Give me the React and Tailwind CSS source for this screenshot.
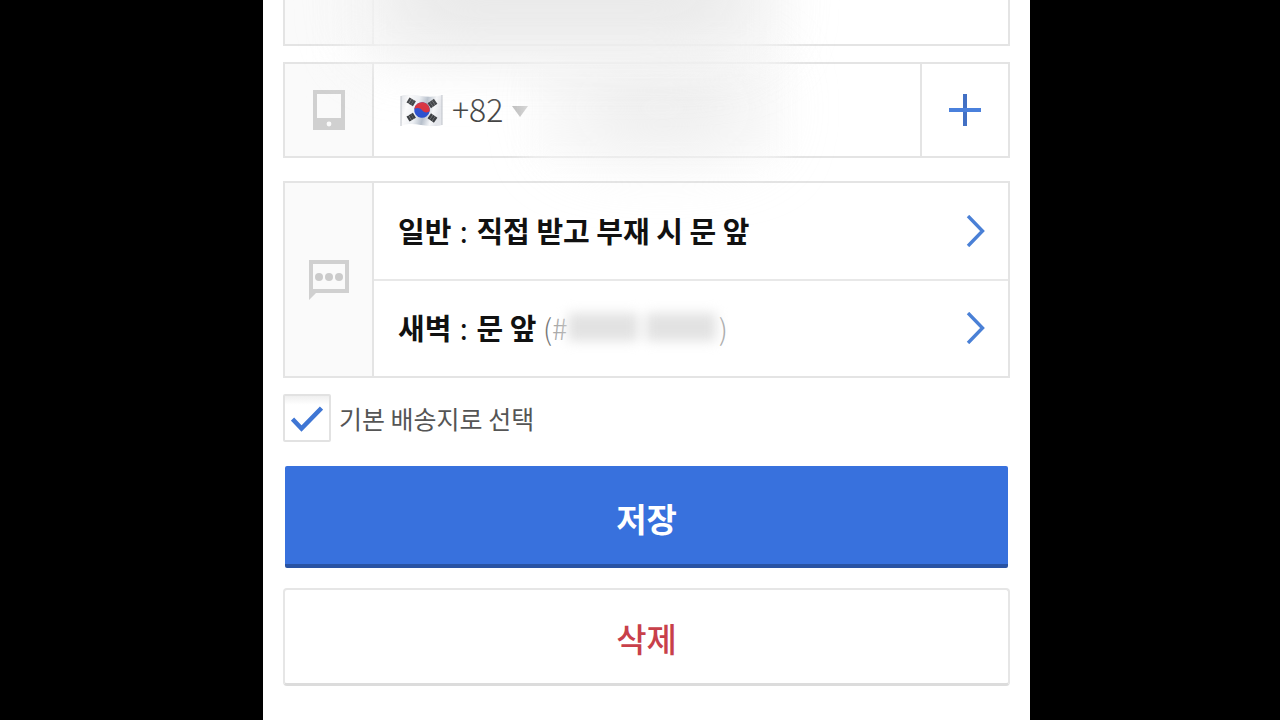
import { useState } from 'react'

function TabletIcon() {
  return (
    <svg className="w-8 h-10" viewBox="0 0 32 40" aria-hidden="true">
      <path fill="#d0d0d0" fillRule="evenodd" d="M0 0h32v40H0zM4 4v24h24V4z" />
      <circle cx="16" cy="34" r="2.4" fill="#fafafa" />
    </svg>
  )
}

function ChatIcon() {
  return (
    <svg className="w-10 h-10" viewBox="0 0 40 40" aria-hidden="true">
      <path fill="#d0d0d0" fillRule="evenodd" d="M0 0h40v33H7L0 40zM4 4v25h32V4z" />
      <circle cx="10" cy="17" r="4" fill="#cbcbcb" />
      <circle cx="20" cy="17" r="4" fill="#cbcbcb" />
      <circle cx="30" cy="17" r="4" fill="#cbcbcb" />
    </svg>
  )
}

function Chevron() {
  return (
    <svg className="w-5 h-8 shrink-0" viewBox="0 0 20 32" fill="none" stroke="#4a80d6" strokeWidth="3.4" aria-hidden="true">
      <path d="M2 1l14.5 15L2 31" />
    </svg>
  )
}

function Flag() {
  return (
    <svg className="w-11 h-8 shrink-0" viewBox="0 0 44 32" aria-hidden="true">
      <defs>
        <linearGradient id="cloth" x1="0" x2="1" y1="0" y2="0.2">
          <stop offset="0" stopColor="#e0e3e8" />
          <stop offset="0.2" stopColor="#fbfbfc" />
          <stop offset="0.45" stopColor="#eceff3" />
          <stop offset="0.65" stopColor="#b6bfcb" />
          <stop offset="0.85" stopColor="#f6f7f9" />
          <stop offset="1" stopColor="#e3e5ea" />
        </linearGradient>
      </defs>
      <path d="M1 2C8 0 14 1 21 2s15 1 21-1v30c-7 2-14 1-21 0S8 29 1 32z" fill="url(#cloth)" />
      <path d="M1 2v30M42 1v30" stroke="#bfc3ca" />
      <g transform="rotate(8 22 16)">
        <circle cx="22" cy="16" r="7.8" fill="#2b50cf" />
        <path d="M14.200 16a7.800 7.800 0 0 1 15.600 0c-2.600 3-5.800 2-7.800 0s-5.200-2-7.800 0z" fill="#d92f3c" />
      </g>
      <g stroke="#3b3e42" strokeWidth="2.4">
        <path d="M7.500 9l3-5M9.700 10.400l3-5M11.900 11.700l3-5" />
        <path d="M7.500 22l3 5M9.700 20.700l3 5M11.900 19.300l3 5" />
        <path d="M28.500 8.500l3.500 5M30.700 7l3.500 5M32.900 5.500l3.500 5" />
        <path d="M28.500 25l3.500-5M30.700 26.500l3.500-5M32.900 28l3.500-5" />
      </g>
    </svg>
  )
}

function IconCell({ children }) {
  return (
    <div className="w-[89px] shrink-0 flex items-center justify-center bg-[#fafafa] border-r-2 border-[#e4e4e4]">
      {children}
    </div>
  )
}

function RequestRow({ children }) {
  return (
    <button type="button" className="flex-1 w-full flex items-center justify-between pl-6 pr-[22px] text-left text-[29px] leading-10 text-[#111]">
      <span className="flex items-center pb-0.5">{children}</span>
      <Chevron />
    </button>
  )
}

export default function App() {
  const [isDefault, setIsDefault] = useState(true)

  return (
    <div className="min-h-screen grid grid-cols-[263fr_767fr_250fr] bg-black overflow-hidden font-['Noto_Sans_CJK_KR',sans-serif]">
      <form className="col-start-2 bg-white px-5 overflow-hidden" onSubmit={(e) => e.preventDefault()}>
        {/* address, masked */}
        <div className="relative h-[46px] flex border-2 border-t-0 border-[#e4e4e4]">
          <IconCell />
          <div className="absolute z-10 left-16 right-56 -top-16 h-32 bg-[#f8f8f8]/90 blur-xl pointer-events-none" />
          <div className="absolute z-10 left-24 right-64 -top-10 h-18 rounded-full bg-[#e2e2e2] blur-2xl pointer-events-none" />
        </div>

        {/* phone */}
        <div className="relative mt-4 h-24 flex border-2 border-[#e4e4e4]">
          <IconCell><TabletIcon /></IconCell>
          <div className="flex-1 min-w-0 flex items-center pl-[26px]">
            <Flag />
            <div className="relative ml-2">
              <select aria-label="국가 번호" defaultValue="82" className="block appearance-none w-20 h-12 pb-1 bg-transparent text-[32px] leading-10 font-light text-[#444] outline-none">
                <option value="82">+82</option>
              </select>
              <svg className="absolute right-1 top-5 w-4 h-3 pointer-events-none" viewBox="0 0 16 12" aria-hidden="true">
                <path d="M0 0h16L8 11z" fill="#b8b8b8" />
              </svg>
            </div>
            <input type="tel" aria-label="휴대폰 번호" className="flex-1 min-w-0 h-12 bg-transparent outline-none" />
          </div>
          <button type="button" aria-label="번호 추가" className="w-[88px] shrink-0 flex items-center justify-center border-l-2 border-[#e4e4e4]">
            <svg className="w-8 h-8" viewBox="0 0 32 32" fill="none" strokeWidth="4" aria-hidden="true">
              <path d="M16 0v32" stroke="#4270c4" />
              <path d="M0 16h32" stroke="#4a80dc" />
            </svg>
          </button>
          <div className="absolute left-60 right-56 -top-1 -bottom-1 bg-[#fbfbfb]/80 blur-md pointer-events-none" />
          <div className="absolute left-72 right-64 top-4 bottom-5 rounded-full bg-[#e6e6e6] blur-2xl pointer-events-none" />
        </div>

        {/* delivery requests */}
        <div className="mt-[23px] h-[197px] flex border-2 border-[#e4e4e4]">
          <IconCell><ChatIcon /></IconCell>
          <div className="flex-1 flex flex-col divide-y-2 divide-[#e8e8e8]">
            <RequestRow>
              <b>일반</b>
              <span className="px-0.5 whitespace-pre"> : </span>
              <b>직접 받고 부재 시 문 앞</b>
            </RequestRow>
            <RequestRow>
              <b>새벽</b>
              <span className="px-0.5 whitespace-pre"> : </span>
              <b className="whitespace-pre">문 앞 </b>
              <span className="font-light text-[#777]">(</span>
              <span className="font-light text-[#aaa]">#</span>
              <span className="flex w-[151px] h-12 items-center gap-2 blur-[6px]">
                <span className="w-[70px] h-7 bg-[#e2e2e2]" />
                <span className="w-[70px] h-7 bg-[#e2e2e2]" />
              </span>
              <span className="font-light text-[#aaa]">)</span>
            </RequestRow>
          </div>
        </div>

        <label className="mt-4 flex items-center gap-2 text-[25px] leading-10 text-[#555]">
          <span className="relative flex w-12 h-12">
            <input
              type="checkbox"
              checked={isDefault}
              onChange={(e) => setIsDefault(e.target.checked)}
              className="peer appearance-none w-12 h-12 rounded-xs border-2 border-[#e2e2e2] bg-linear-to-b from-[#efefef] to-white to-20%"
            />
            <svg className="absolute left-2 top-3 w-8 h-7 pointer-events-none opacity-0 peer-checked:opacity-100" viewBox="0 0 32 28" fill="none" stroke="#3f76d4" strokeWidth="4.5" aria-hidden="true">
              <path d="M1.500 13l9 9.500L30.500 2" />
            </svg>
          </span>
          기본 배송지로 선택
        </label>

        <div className="mt-6 mx-0.5">
          <button type="submit" className="block w-full h-[102px] rounded-xs bg-[#3871dd] border-b-4 border-[#2953a3] text-[33px] font-bold text-white pt-2">
            저장
          </button>
        </div>
        <button type="button" className="block mt-5 w-full h-[98px] rounded-sm border-2 border-b-3 border-[#e6e6e6] border-b-[#dcdcdc] text-[33px] font-medium text-[#c8404a] pt-1">
          삭제
        </button>
      </form>
    </div>
  )
}
